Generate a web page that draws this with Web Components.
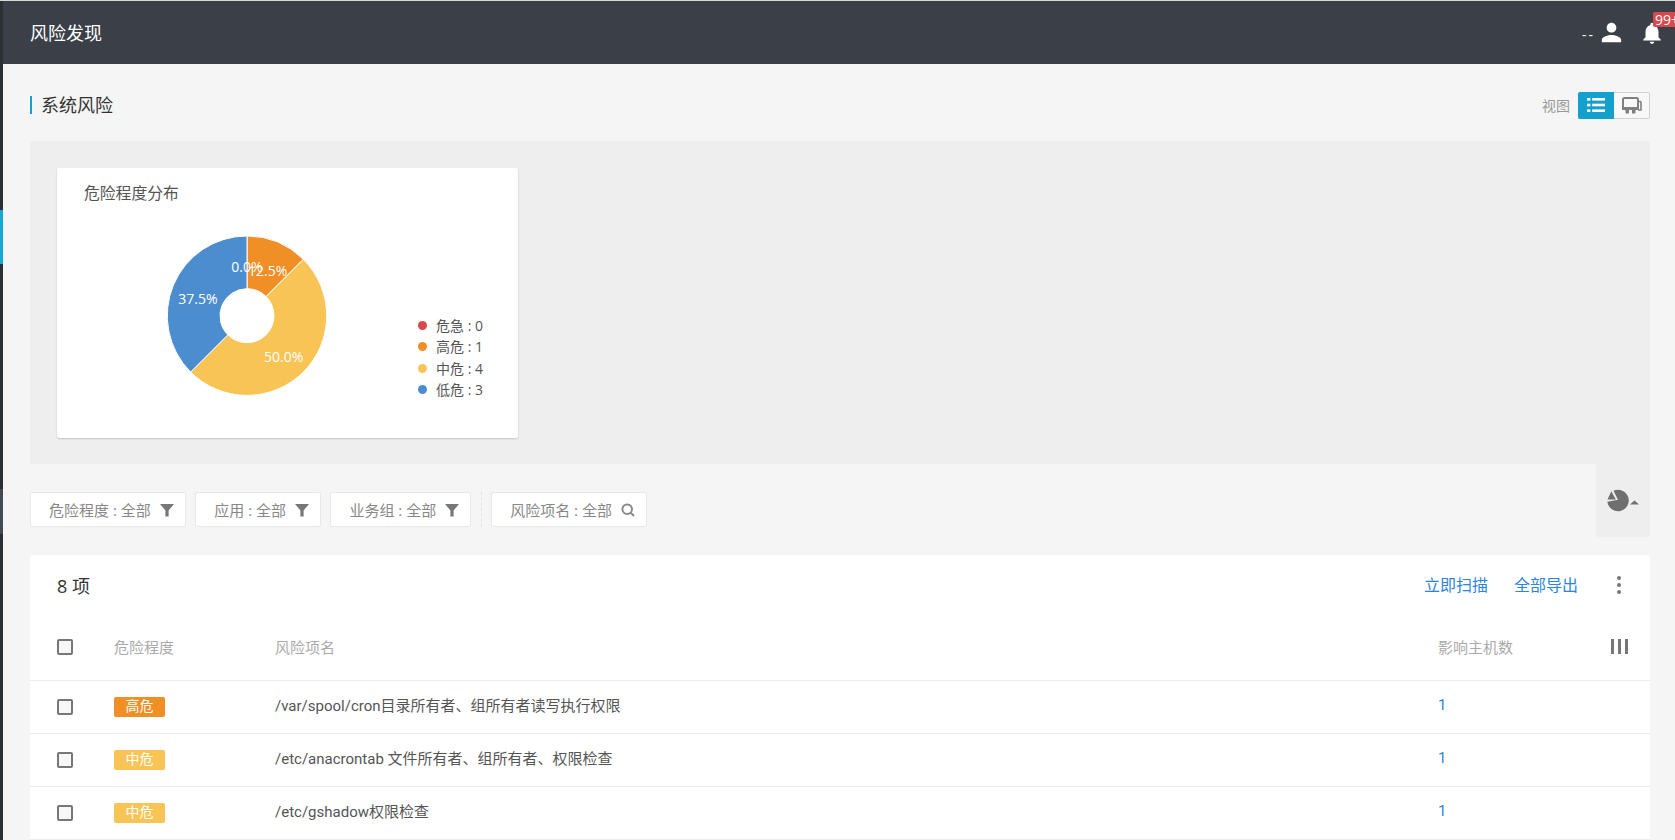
<!DOCTYPE html>
<html lang="zh">
<head>
<meta charset="utf-8">
<title>风险发现</title>
<style>
    html, body { margin: 0; height: 840px; overflow: hidden; background: #f5f5f5; }
    body { font-family: "Open Sans", "Noto Sans CJK SC", sans-serif; color: #555; }
</style>
</head>
<body>
<app-shell>
    <top-bar heading="风险发现"></top-bar>
    <section-head heading="系统风险"></section-head>
    <chart-panel></chart-panel>
    <filter-bar>
        <filter-chip label="危险程度 : 全部"></filter-chip>
        <filter-chip label="应用 : 全部"></filter-chip>
        <filter-chip label="业务组 : 全部"></filter-chip>
        <filter-chip label="风险项名 : 全部" kind="search" slot="search"></filter-chip>
    </filter-bar>
    <risk-table total="8">
        <risk-row level="high" count="1">/var/spool/cron目录所有者、组所有者读写执行权限</risk-row>
        <risk-row level="mid" count="1">/etc/anacrontab 文件所有者、组所有者、权限检查</risk-row>
        <risk-row level="mid" count="1">/etc/gshadow权限检查</risk-row>
    </risk-table>
</app-shell>

<script>
// petit helper : shadow root ouvert + contenu
function mount(el, html) {
    el.attachShadow({ mode: 'open' }).innerHTML = html;
}

class AppShell extends HTMLElement {
    constructor() {
        super();
        mount(this, `
            <style>
                :host { display: block; height: 840px; overflow: hidden; box-sizing: border-box; border-top: 1px solid #d8d8d8; }
                .wrap { display: flex; height: 100%; }
                .rail { width: 3px; flex: none; background: #2a2f33; display: flex; flex-direction: column; }
                .rail i { display: block; flex: none; }
                .rail .on { height: 54px; margin-top: 209px; background: #17a6d8; }
                .rail .hover { height: 45px; margin-top: 225px; background: #434a54; }
                .main { flex: 1; min-width: 0; display: flex; flex-direction: column; }
            </style>
            <div class="wrap">
                <div class="rail"><i class="on"></i><i class="hover"></i></div>
                <div class="main"><slot></slot></div>
            </div>
        `);
    }
}

class TopBar extends HTMLElement {
    constructor() {
        super();
        mount(this, `
            <style>
                :host { display: block; }
                .bar { height: 63px; background: #3b4048; display: flex; align-items: center; padding-left: 27px; color: #fff; position: relative; }
                h1 { margin: 0; font-size: 18px; font-weight: 400; flex: 1; padding-bottom: 1px; }
                .user { font-size: 14px; letter-spacing: 2px; margin-right: 2px; padding-top: 3px; }
                svg { display: block; fill: #fff; }
                .bell { position: relative; margin-left: 13px; margin-right: 10px; }
                .badge { position: absolute; left: 14px; top: -8px; height: 15px; line-height: 15px; padding: 0 2px; background: #d9484a; color: #fff; font-size: 14px; border-radius: 2px; white-space: nowrap; }
            </style>
            <div class="bar">
                <h1></h1>
                <span class="user">--</span>
                <svg width="29" height="29" viewBox="0 0 24 24"><path d="M12 12c2.21 0 4-1.79 4-4s-1.79-4-4-4-4 1.79-4 4 1.79 4 4 4zm0 2c-2.67 0-8 1.34-8 4v2h16v-2c0-2.66-5.33-4-8-4z"/></svg>
                <div class="bell">
                    <svg width="26" height="26" viewBox="0 0 24 24"><path d="M12 22c1.1 0 2-.9 2-2h-4c0 1.1.9 2 2 2zm6-6v-5c0-3.07-1.63-5.64-4.5-6.32V4c0-.83-.67-1.5-1.5-1.5s-1.5.67-1.5 1.5v.68C7.63 5.36 6 7.92 6 11v5l-2 2v1h16v-1l-2-2z"/></svg>
                    <span class="badge">99+</span>
                </div>
            </div>
        `);
    }
    connectedCallback() {
        this.shadowRoot.querySelector('h1').textContent = this.getAttribute('heading');
    }
}

class SectionHead extends HTMLElement {
    constructor() {
        super();
        mount(this, `
            <style>
                :host { display: block; }
                .head { height: 77px; box-sizing: border-box; padding: 5px 25px 0 27px; display: flex; align-items: center; }
                h2 { margin: 0; flex: 1; font-size: 18px; font-weight: 400; color: #333; line-height: 18px; border-left: 2px solid #17a0cc; padding-left: 9px; }
                .lbl { font-size: 14px; color: #999; margin-right: 8px; }
                .btn { box-sizing: border-box; width: 36px; height: 27px; display: flex; align-items: center; justify-content: center; }
                .btn.on { background: #13a0cd; border-radius: 2px 0 0 2px; }
                .btn.off { background: #f8f8f8; border: 1px solid #d0d0d0; border-left: 0; border-radius: 0 2px 2px 0; }
            </style>
            <div class="head">
                <h2></h2>
                <span class="lbl">视图</span>
                <div class="btn on">
                    <svg width="18" height="16" viewBox="0 0 18 16" fill="#fff"><rect x="0" y="1" width="3.4" height="2.6"/><rect x="5.2" y="1" width="12.8" height="2.6"/><rect x="0" y="6.7" width="3.4" height="2.6"/><rect x="5.2" y="6.7" width="12.8" height="2.6"/><rect x="0" y="12.4" width="3.4" height="2.6"/><rect x="5.2" y="12.4" width="12.8" height="2.6"/></svg>
                </div>
                <div class="btn off">
                    <svg width="20" height="17" viewBox="0 0 20 17"><path d="M16 4.5 H18.2 A1 1 0 0 1 19 5.5 V13 H16" fill="none" stroke="#808080" stroke-width="1.6"/><rect x="1" y="1" width="15" height="11" rx="1.5" fill="#f8f8f8" stroke="#808080" stroke-width="2"/><rect x="0" y="10" width="17" height="3" fill="#808080"/><rect x="3.5" y="13" width="3.5" height="3.5" fill="#808080"/><rect x="10" y="13" width="3.5" height="3.5" fill="#808080"/></svg>
                </div>
            </div>
        `);
    }
    connectedCallback() {
        this.shadowRoot.querySelector('h2').textContent = this.getAttribute('heading');
    }
}

class ChartPanel extends HTMLElement {
    constructor() {
        super();
        mount(this, `
            <style>
                :host { display: block; margin: 0 25px 0 27px; }
                .panel { height: 323px; box-sizing: border-box; background: #eee; border-radius: 2px 2px 0 0; padding: 27px; }
                .card { width: 461px; height: 270px; box-sizing: border-box; background: #fff; border-radius: 2px; box-shadow: 0 1px 2px rgba(0,0,0,.18); padding: 13px 0 0 27px; }
                h3 { margin: 0; height: 24px; line-height: 24px; font-size: 15.8px; font-weight: 400; color: #555; }
                .body { display: flex; margin-left: -27px; }
                svg { display: block; flex: none; }
                text { font-size: 14px; fill: #fff; text-anchor: middle; dominant-baseline: central; }
                ul { list-style: none; margin: 110px 0 0 0; padding: 0; font-size: 14px; color: #555; }
                li { height: 21.33px; line-height: 21.33px; display: flex; align-items: center; gap: 9px; white-space: nowrap; }
                li i { width: 9px; height: 9px; border-radius: 50%; flex: none; }
            </style>
            <div class="panel">
                <div class="card">
                    <h3>危险程度分布</h3>
                    <div class="body">
                        <svg width="361" height="220" viewBox="57 205 361 220">
                            <g stroke="#fff" stroke-width="1">
                                <path fill="#ef8f25" d="M247 236 A79.7 79.7 0 0 1 303.36 259.34 L266.1 296.6 A27 27 0 0 0 247 288.7 Z"/>
                                <path fill="#f9c456" d="M303.36 259.34 A79.7 79.7 0 0 1 190.64 372.06 L227.9 334.8 A27 27 0 0 0 266.1 296.6 Z"/>
                                <path fill="#4c8dcf" d="M190.64 372.06 A79.7 79.7 0 0 1 247 236 L247 288.7 A27 27 0 0 0 227.9 334.8 Z"/>
                            </g>
                            <text x="247" y="266.7">0.0%</text>
                            <text x="267.7" y="270.7">12.5%</text>
                            <text x="283.7" y="356.7">50.0%</text>
                            <text x="198" y="298.7">37.5%</text>
                        </svg>
                        <ul>
                            <li><i style="background:#d9484a"></i>危急 : 0</li>
                            <li><i style="background:#ef8f25"></i>高危 : 1</li>
                            <li><i style="background:#f9c456"></i>中危 : 4</li>
                            <li><i style="background:#4c8dcf"></i>低危 : 3</li>
                        </ul>
                    </div>
                </div>
            </div>
        `);
    }
}

class FilterBar extends HTMLElement {
    constructor() {
        super();
        mount(this, `
            <style>
                :host { display: block; margin: 0 25px 0 27px; }
                .row { display: flex; height: 73px; }
                .chips { flex: 1; display: flex; align-items: flex-start; padding-top: 28px; gap: 9.5px; }
                .sep { width: 0; height: 35px; border-left: 1px dashed #e2e2e2; }
                .tab { width: 54px; flex: none; background: #eee; border-radius: 0 0 2px 2px; display: flex; align-items: center; justify-content: center; }
            </style>
            <div class="row">
                <div class="chips"><slot></slot><div class="sep"></div><slot name="search"></slot></div>
                <div class="tab">
                    <svg width="32" height="25" viewBox="0 0 32 25" fill="#6f6f6f">
                        <path d="M6.5 2.8 L11 11.8 L0.4 13.8 A10.7 10.7 0 1 0 6.5 2.8 Z"/>
                        <path d="M4.3 3.2 L0.5 11.4 L8.8 11.4 Z"/>
                        <path d="M23 16.5 L27.5 12.5 L32 16.5 Z"/>
                    </svg>
                </div>
            </div>
        `);
    }
}

class FilterChip extends HTMLElement {
    constructor() {
        super();
        mount(this, `
            <style>
                :host { display: block; }
                .chip { box-sizing: border-box; height: 35px; display: flex; align-items: center; background: #fff; border: 1px solid #e8e8e8; border-radius: 2px; padding: 0 11px 0 18px; font-size: 15px; color: #888; white-space: nowrap; }
                svg { display: block; margin-left: 9px; fill: #777; }
            </style>
            <div class="chip"><span></span>
                <svg id="funnel" width="14" height="14" viewBox="0 0 14 14"><path d="M0 1 H14 L8.6 7.4 V13.5 H5.4 V7.4 Z"/></svg>
            </div>
        `);
    }
    connectedCallback() {
        this.shadowRoot.querySelector('span').textContent = this.getAttribute('label');
        if (this.getAttribute('kind') === 'search') {
            this.shadowRoot.querySelector('#funnel').outerHTML =
                '<svg width="14" height="14" viewBox="0 0 14 14" style="fill:none"><circle cx="6.2" cy="6.2" r="4.8" stroke="#8a8a8a" stroke-width="2"/><path d="M9.5 9.5 L13 13" stroke="#8a8a8a" stroke-width="2"/></svg>';
        }
    }
}

const TABLE_GRID = 'grid-template-columns: 84px 161px 1fr 173px 39px;';

class CheckBox extends HTMLElement {
    constructor() {
        super();
        mount(this, `
            <style>
                :host { display: block; width: 16px; height: 16px; box-sizing: border-box; border: 2px solid #777; border-radius: 2px; background: #f7f7f7; }
            </style>
        `);
    }
}

class RiskTable extends HTMLElement {
    constructor() {
        super();
        mount(this, `
            <style>
                :host { display: block; margin: 18px 25px 0 27px; }
                .card { background: #fff; border-radius: 2px 2px 0 0; }
                .tools { height: 60px; display: flex; align-items: center; padding: 0 29px 0 27px; }
                .total { flex: 1; font-size: 18px; color: #333; }
                a { color: #2a84e0; font-size: 16px; margin-right: 26px; padding-bottom: 2px; text-decoration: none; }
                a + a { margin-right: 39px; }
                .dots { width: 4px; display: flex; flex-direction: column; gap: 3px; }
                .dots i { width: 4px; height: 4px; border-radius: 50%; background: #777; }
                .head { height: 66px; box-sizing: border-box; display: grid; ${TABLE_GRID} align-items: center; border-bottom: 1px solid #ececec; padding-bottom: 2px; font-size: 15px; color: #aaa; }
                .head check-box { margin-left: 27px; }
                .bars { display: flex; gap: 4px; }
                .bars i { width: 3px; height: 15px; background: #777; }
            </style>
            <div class="card">
                <div class="tools">
                    <span class="total"></span>
                    <a>立即扫描</a><a>全部导出</a>
                    <div class="dots"><i></i><i></i><i></i></div>
                </div>
                <div class="head">
                    <check-box></check-box>
                    <span>危险程度</span>
                    <span>风险项名</span>
                    <span>影响主机数</span>
                    <div class="bars"><i></i><i></i><i></i></div>
                </div>
                <slot></slot>
            </div>
        `);
    }
    connectedCallback() {
        this.shadowRoot.querySelector('.total').textContent = this.getAttribute('total') + ' 项';
    }
}

class RiskRow extends HTMLElement {
    constructor() {
        super();
        mount(this, `
            <style>
                :host { display: block; }
                .row { height: 53px; box-sizing: border-box; display: grid; ${TABLE_GRID} align-items: center; border-bottom: 1px solid #ececec; font-family: Roboto, "Noto Sans CJK SC", sans-serif; font-size: 15px; color: #555; }
                check-box { margin-left: 27px; }
                .tag { width: 51px; height: 20px; line-height: 18px; text-align: center; border-radius: 2px; color: #fff; font-size: 14px; }
                .tag.high { background: #ef8f25; }
                .tag.mid { background: #f9c456; }
                .name, .count { padding-bottom: 5px; }
                .count { color: #2a84e0; }
            </style>
            <div class="row">
                <check-box></check-box>
                <div><div class="tag"></div></div>
                <div class="name"><slot></slot></div>
                <span class="count"></span>
                <span></span>
            </div>
        `);
    }
    connectedCallback() {
        const level = this.getAttribute('level');
        const tag = this.shadowRoot.querySelector('.tag');
        tag.classList.add(level);
        tag.textContent = level === 'high' ? '高危' : '中危';
        this.shadowRoot.querySelector('.count').textContent = this.getAttribute('count');
    }
}

customElements.define('check-box', CheckBox);
customElements.define('app-shell', AppShell);
customElements.define('top-bar', TopBar);
customElements.define('section-head', SectionHead);
customElements.define('chart-panel', ChartPanel);
customElements.define('filter-bar', FilterBar);
customElements.define('filter-chip', FilterChip);
customElements.define('risk-table', RiskTable);
customElements.define('risk-row', RiskRow);
</script>
</body>
</html>
